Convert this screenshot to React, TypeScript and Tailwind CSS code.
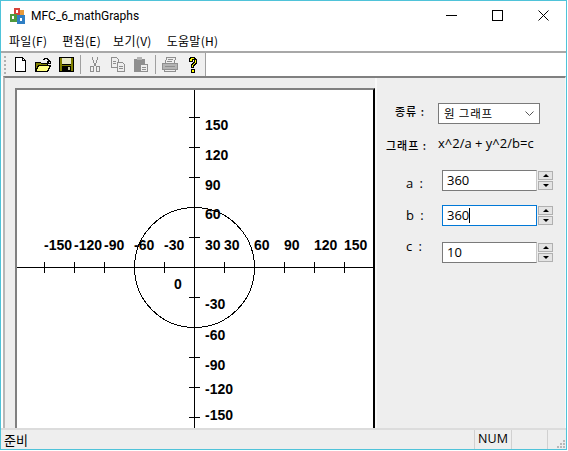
const MENUS: [string, string][] = [
  ["파일(F)", "mr-[15px]"],
  ["편집(E)", "mr-[12px]"],
  ["보기(V)", "mr-[15px]"],
  ["도움말(H)", ""],
];
const TICKS = [-150, -120, -90, -60, -30, 30, 60, 90, 120, 150];
const X0 = 177;
const Y0 = 177;
// y-axis labels don't sit at a fixed offset from their ticks in the original
const YLABELS: [number, number][] = [
  [150, 40], [120, 70], [90, 100], [60, 129], [30, 160],
  [-30, 219], [-60, 250], [-90, 280], [-120, 304], [-150, 330],
];
const KR = { fontFamily: '"Noto Sans CJK KR", sans-serif' };
const BOLD = {
  fontSize: 14,
  fontWeight: 700,
  fontFamily: '"Liberation Sans", sans-serif',
};

function Graph() {
  return (
    <svg width="356" height="338" className="block" shapeRendering="crispEdges">
      <line x1="0" y1={Y0 + 0.5} x2="356" y2={Y0 + 0.5} stroke="#000" />
      <line x1={X0 + 0.5} y1="0" x2={X0 + 0.5} y2="338" stroke="#000" />
      {TICKS.map((t) => (
        <g key={t}>
          <line x1={X0 + t + 0.5} y1={Y0 - 5} x2={X0 + t + 0.5} y2={Y0 + 6} stroke="#000" />
          <line x1={X0 - 5} y1={Y0 - t + 0.5} x2={X0 + 6} y2={Y0 - t + 0.5} stroke="#000" />
          <text x={X0 + t} y="160" style={BOLD}>{t}</text>
        </g>
      ))}
      {YLABELS.map(([t, y]) => (
        <text key={t} x={X0 + 11} y={y} style={BOLD}>{t}</text>
      ))}
      <text x={157} y={199} style={BOLD}>0</text>
      <circle cx={X0 + 0.5} cy={Y0 + 0.5} r="60" fill="none" stroke="#000" />
    </svg>
  );
}

function NewIcon() {
  return (
    <svg width="16" height="16" shapeRendering="crispEdges">
      <path d="M3.5 0.5h7l3 3v11h-10z" fill="#fff" stroke="#000" />
      <path d="M10.5 0.5v3h3" fill="none" stroke="#000" />
    </svg>
  );
}

function OpenIcon() {
  return (
    <svg width="16" height="16" shapeRendering="crispEdges">
      <path d="M0.5 5.5h5l1 1h6v8h-12z" fill="#808000" stroke="#000" />
      <path d="M3.5 8.5h12l-3 6h-12z" fill="#ffff80" stroke="#000" />
      <path d="M8 2h1V1h3v1h1v1h1v2M12 4h4v1h-1v1h-2V5h-1z" fill="none" stroke="#000" />
    </svg>
  );
}

function SaveIcon() {
  return (
    <svg width="16" height="16" shapeRendering="crispEdges">
      <rect x="1.5" y="0.5" width="14" height="14" fill="#808000" stroke="#000" />
      <rect x="4" y="1" width="9" height="6" fill="#e8e8c8" />
      <rect x="4" y="7" width="9" height="1" fill="#000" />
      <rect x="4" y="9" width="9" height="5" fill="#000" />
      <rect x="10" y="10" width="2" height="3" fill="#c8c8a0" />
    </svg>
  );
}

function CutIcon() {
  return (
    <svg width="16" height="16" fill="none" stroke="#8f8f8f" shapeRendering="crispEdges">
      <path d="M5 0l3 9M11 0l-3 9" />
      <rect x="3.5" y="9.5" width="3" height="5" />
      <rect x="9.5" y="9.5" width="3" height="5" />
    </svg>
  );
}

function CopyIcon() {
  return (
    <svg width="16" height="16" shapeRendering="crispEdges">
      <path d="M1.5 0.5h5l2 2v8h-7z" fill="#eee" stroke="#8f8f8f" />
      <path d="M7.5 5.5h5l2 2v7h-7z" fill="#eee" stroke="#8f8f8f" />
      <path d="M9 9.5h4M9 11.5h4M3 4.5h3M3 6.5h3" stroke="#8f8f8f" />
    </svg>
  );
}

function PasteIcon() {
  return (
    <svg width="16" height="16" shapeRendering="crispEdges">
      <rect x="1" y="2" width="11" height="13" fill="#8f8f8f" />
      <rect x="4" y="0" width="5" height="3" fill="#b4b4b4" />
      <rect x="7.5" y="7.5" width="7" height="7" fill="#eee" stroke="#8f8f8f" />
      <path d="M9 10.5h4M9 12.5h4" stroke="#8f8f8f" />
    </svg>
  );
}

function PrintIcon() {
  return (
    <svg width="16" height="16" shapeRendering="crispEdges">
      <path d="M4.5 0.5h9l-1 6h-9z" fill="#eee" stroke="#8f8f8f" />
      <path d="M0.5 6.5h15v6h-15z" fill="#b4b4b4" stroke="#8f8f8f" />
      <path d="M2.5 12.5h11v2h-11z" fill="#eee" stroke="#8f8f8f" />
      <path d="M6 2.5h5M5 4.5h5M3 9.5h10" stroke="#8f8f8f" />
    </svg>
  );
}

function HelpIcon() {
  return (
    <svg width="16" height="16" shapeRendering="crispEdges">
      <path
        d="M5.5 0.5h4v1h1v1h1v4h-1v1h-1v1h-1v2h-2v-3h1v-1h1v-1h1v-3h-2v2h-3v-3h1z"
        fill="#ffff00"
        stroke="#000"
      />
      <rect x="6.5" y="12.5" width="3" height="3" fill="#ffff00" stroke="#000" />
    </svg>
  );
}

function AppIcon() {
  return (
    <svg width="16" height="16" shapeRendering="crispEdges">
      <rect x="4" y="0" width="6" height="7" fill="#d8433a" />
      <rect x="10" y="2" width="4" height="5" fill="#e89a3a" />
      <rect x="0" y="6" width="7" height="8" fill="#4f9a3e" />
      <rect x="7" y="7" width="8" height="9" fill="#2f7fc4" />
      <rect x="6" y="2" width="2" height="3" fill="#fff" />
      <rect x="2" y="8" width="2" height="3" fill="#fff" />
      <rect x="10" y="10" width="2" height="3" fill="#fff" />
    </svg>
  );
}

function Btn({ children }: { children: React.ReactNode }) {
  return <div className="w-[23px] pl-[3px]">{children}</div>;
}

function Sep() {
  return (
    <div className="w-[6px] pl-[2px] flex items-center">
      <div className="w-px h-[19px] bg-[#a0a0a0]" />
    </div>
  );
}

function Spinner() {
  return (
    <div className="flex flex-col gap-px ml-[1px]">
      <div className="w-[15px] h-[9px] bg-[#e4e4e4] border border-[#b0b0b0] flex items-center justify-center">
        <div className="w-0 h-0 border-x-[3px] border-x-transparent border-b-[3px] border-b-black" />
      </div>
      <div className="w-[15px] h-[9px] bg-[#e4e4e4] border border-[#b0b0b0] flex items-center justify-center">
        <div className="w-0 h-0 border-x-[3px] border-x-transparent border-t-[3px] border-t-black" />
      </div>
    </div>
  );
}

type FieldProps = {
  label: string;
  value: string;
  focused?: boolean;
  rowClass: string;
  labelClass: string;
};

function Field({ label, value, focused, rowClass, labelClass }: FieldProps) {
  return (
    <div className={`flex items-center ${rowClass}`}>
      <div className={`w-[65px] pl-[29px] text-[13px] leading-none tracking-[1.5px] whitespace-pre ${labelClass}`}>{label}</div>
      <div
        className={`w-[95px] h-[21px] bg-white border pl-[4px] text-[13px] flex items-center ${
          focused ? "border-[#0078d7]" : "border-[#7a7a7a] border-r-[#c8c8c8]"
        }`}
      >
        {value}
        {focused && <span className="w-px h-[15px] bg-black" />}
      </div>
      <Spinner />
    </div>
  );
}

export default function App() {
  return (
    <div
      className="w-[568px] h-[451px] overflow-hidden bg-white text-black"
      style={{ fontFamily: '"Open Sans", "Noto Sans CJK KR", sans-serif' }}
    >
      <div className="w-[567px] h-[450px] flex flex-col bg-white border border-[#4fc3d9]">
        {/* title bar */}
        <div className="h-[29px] shrink-0 flex items-center pl-[9px] bg-white">
          <AppIcon />
          <span className="ml-[5px] text-[12px] leading-none" style={{ fontFamily: "Roboto, sans-serif" }}>
            MFC_6_mathGraphs
          </span>
          <div className="ml-auto flex items-center pr-[17px] gap-[35px]">
            <svg width="11" height="11" shapeRendering="crispEdges"><path d="M0 5.5h11" stroke="#000" /></svg>
            <svg width="11" height="11" shapeRendering="crispEdges"><rect x="0.5" y="0.5" width="10" height="10" fill="none" stroke="#000" /></svg>
            <svg width="11" height="11"><path d="M0.5 0.5l10 10M10.5 0.5l-10 10" stroke="#000" fill="none" /></svg>
          </div>
        </div>
        {/* menu */}
        <div className="h-[21px] shrink-0 flex items-center pl-[8px] text-[12px] tracking-[0.3px] bg-white" style={KR}>
          {MENUS.map(([m, cls]) => (
            <span key={m} className={cls}>{m}</span>
          ))}
        </div>
        {/* toolbar */}
        <div className="h-[25px] shrink-0 flex bg-white border-t-2 border-[#a8a8a8]">
          <div className="h-full flex items-center bg-[#f0f0f0] pl-[3px] border-r border-[#a0a0a0]">
            <div className="w-[3px] h-[18px] border-l-2 border-dotted border-[#b0b0b0] mr-[2px]" />
            <Btn><NewIcon /></Btn>
            <Btn><OpenIcon /></Btn>
            <Btn><SaveIcon /></Btn>
            <Sep />
            <Btn><CutIcon /></Btn>
            <Btn><CopyIcon /></Btn>
            <Btn><PasteIcon /></Btn>
            <Sep />
            <Btn><PrintIcon /></Btn>
            <Btn><HelpIcon /></Btn>
          </div>
        </div>
        {/* client */}
        <div className="flex-1 min-h-0 flex bg-[#eeeeee] border-t-2 border-t-[#808080] ml-[2px] border-l-2 border-l-[#b8b8b8] border-r border-r-[#f8f8f8]">
          <div className="ml-[10px] mt-[10px] w-[360px] h-[340px] border-2 border-[#808080] border-r-black border-b-0 bg-white shrink-0 overflow-hidden">
            <Graph />
          </div>
          <div className="flex-1 pt-[25px] border-l-2 border-l-[#f8f8f8]">
            <div className="flex items-center">
              <div className="w-[61px] pl-[18px] -mt-[4px] font-medium text-[11px] tracking-[1px]" style={KR}>종류 :</div>
              <div className="w-[102px] h-[21px] bg-white border border-[#7a7a7a] flex items-center pl-[5px] pr-[5px] text-[11.5px] tracking-[0.8px]" style={KR}>
                원 그래프
                <svg width="9" height="5" className="ml-auto" fill="none" stroke="#555"><path d="M0.5 0.5l4 4 4-4" /></svg>
              </div>
            </div>
            <div className="flex items-center mt-[12px] h-[16px]">
              <div className="w-[61px] pl-[9px] mt-[2px] font-medium text-[11px] tracking-[1px]" style={KR}>그래프 :</div>
              <div className="text-[13px] whitespace-nowrap">x^2/a + y^2/b=c</div>
            </div>
            <Field label="a :" value="360" rowClass="mt-[18px]" labelClass="mt-[6px]" />
            <Field label="b :" value="360" focused rowClass="mt-[14px]" labelClass="" />
            <Field label="c :" value="10" rowClass="mt-[16px]" labelClass="-mt-[12px]" />
          </div>
        </div>
        {/* status bar */}
        <div className="h-[21px] shrink-0 flex items-center bg-[#eeeeee] border-t-2 border-[#dcdcdc] text-[13px]" style={KR}>
          <span className="pl-[3px]">준비</span>
          <div className="ml-auto flex h-full items-stretch">
            <div className="w-[37px] border-l border-[#d0d0d0] flex items-center justify-center text-[12.5px]" style={{ fontFamily: '"Open Sans", sans-serif' }}>NUM</div>
            <div className="w-[36px] border-l border-[#d0d0d0]" />
            <div className="w-[19px] border-l border-[#d0d0d0] flex items-end justify-end pr-[1px] pb-[1px]">
              <svg width="8" height="8" fill="#b8b8b8">
                <rect x="6" y="0" width="2" height="2" />
                <rect x="3" y="3" width="2" height="2" />
                <rect x="6" y="3" width="2" height="2" />
                <rect x="0" y="6" width="2" height="2" />
                <rect x="3" y="6" width="2" height="2" />
                <rect x="6" y="6" width="2" height="2" />
              </svg>
            </div>
          </div>
        </div>
      </div>
    </div>
  );
}
